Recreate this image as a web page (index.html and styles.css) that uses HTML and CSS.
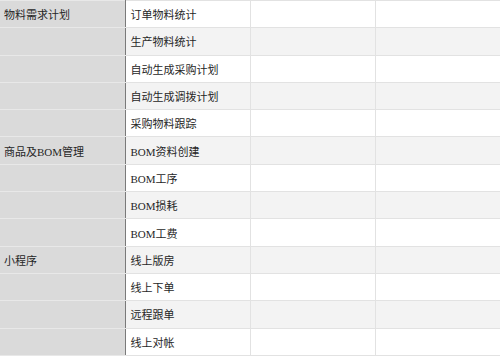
FILE: index.html
```html
<!DOCTYPE html>
<html lang="zh">
<head>
<meta charset="utf-8">
<link rel="stylesheet" href="styles.css">
</head>
<body>
<table class="grid">
  <colgroup><col class="c"><col class="c"><col class="c"><col class="c"></colgroup>
  <tbody>
    <tr><td class="cat">物料需求计划</td><td>订单物料统计</td><td></td><td></td></tr>
    <tr><td class="cat"></td><td>生产物料统计</td><td></td><td></td></tr>
    <tr><td class="cat"></td><td>自动生成采购计划</td><td></td><td></td></tr>
    <tr><td class="cat"></td><td>自动生成调拨计划</td><td></td><td></td></tr>
    <tr><td class="cat"></td><td>采购物料跟踪</td><td></td><td></td></tr>
    <tr><td class="cat">商品及BOM管理</td><td>BOM资料创建</td><td></td><td></td></tr>
    <tr><td class="cat"></td><td>BOM工序</td><td></td><td></td></tr>
    <tr><td class="cat"></td><td>BOM损耗</td><td></td><td></td></tr>
    <tr><td class="cat"></td><td>BOM工费</td><td></td><td></td></tr>
    <tr><td class="cat">小程序</td><td>线上版房</td><td></td><td></td></tr>
    <tr><td class="cat"></td><td>线上下单</td><td></td><td></td></tr>
    <tr><td class="cat"></td><td>远程跟单</td><td></td><td></td></tr>
    <tr><td class="cat"></td><td>线上对帐</td><td></td><td></td></tr>
  </tbody>
</table>
</body>
</html>
```
FILE: styles.css
```css
html, body {
  margin: 0;
  padding: 0;
  background: #ffffff;
}
body {
  font-family: "Liberation Serif", "Noto Sans CJK SC", serif;
  font-size: 11px;
  color: #262626;
}
.grid {
  width: 500px;
  border-collapse: collapse;
  table-layout: fixed;
}
.c { width: 125px; }
.grid td {
  height: 26.3px;
  padding: 0 5px;
  border: 1px solid #e2e2e2;
  vertical-align: middle;
  white-space: nowrap;
  overflow: hidden;
}
.grid tr:nth-child(even) td { background: #f3f3f3; }
.grid td.cat {
  background: #dadada;
  padding-left: 4px;
  border-color: #e8e8e8;
  border-right: 1px solid #7a7a7a;
  border-left: 0;
}
.grid tr:nth-child(even) td.cat { background: #dadada; }
```
